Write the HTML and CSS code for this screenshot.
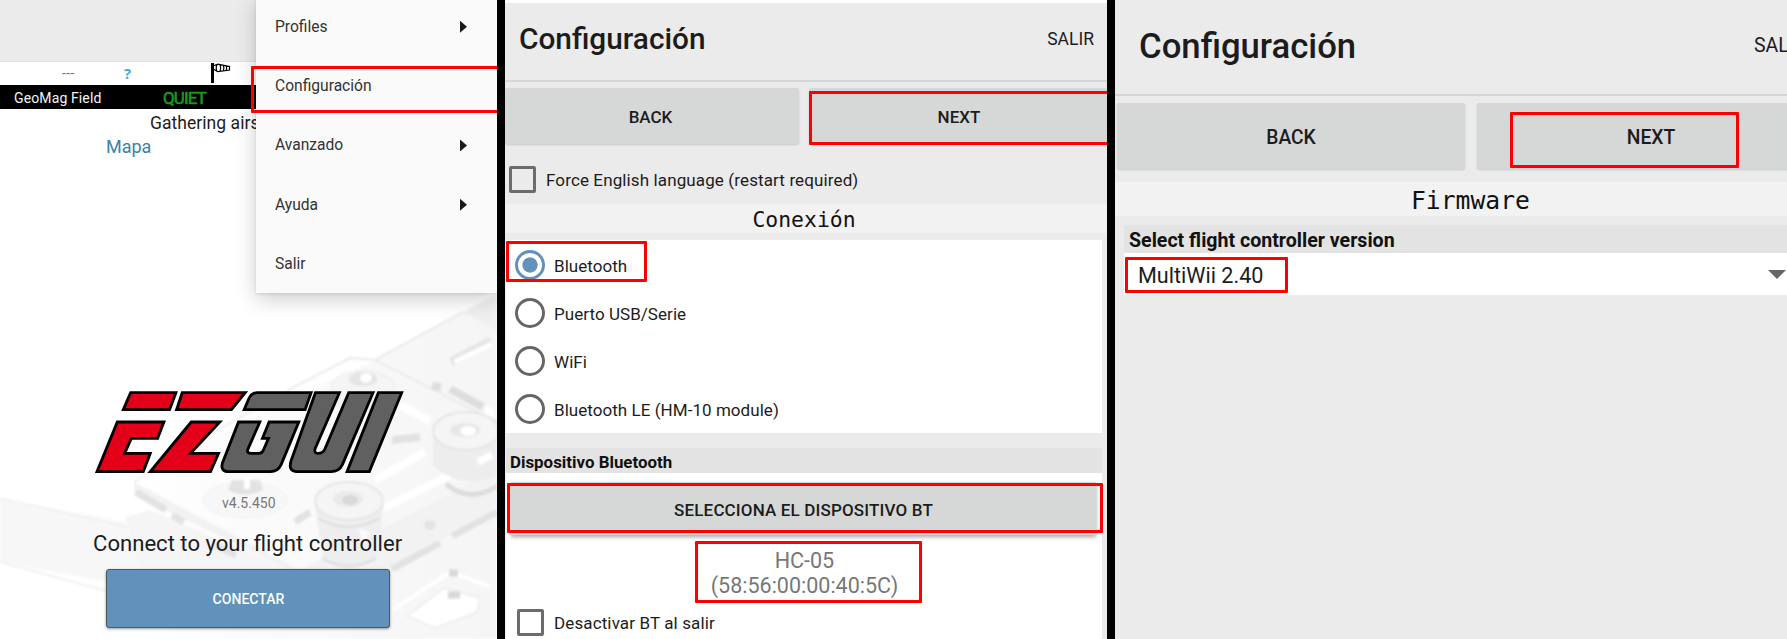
FILE: index.html
```html
<!DOCTYPE html>
<html lang="es">
<head>
<meta charset="utf-8">
<title>EZ-GUI</title>
<link rel="stylesheet" href="styles.css">
</head>
<body>
<main class="board">
  <section class="home">
    <svg class="art" viewBox="0 0 497 639">
      <defs>
        <linearGradient id="fade" x1="0" y1="0" x2="1" y2="0"><stop offset="0" stop-color="#fff"/><stop offset="1" stop-color="#f3f3f3"/></linearGradient>
        <filter id="soft"><feGaussianBlur stdDeviation="1.1"/></filter>
      </defs>
      <g filter="url(#soft)" opacity=".8">
        <path d="M0 498 L125 522 L150 590 L0 562Z" fill="#f6f6f6"/>
        <path d="M0 498 L140 530 M0 562 L110 592" stroke="#eee" fill="none" stroke-width="2"/>
        <path d="M375 360 L497 294 V639 H150 L145 520 L134 482 L200 440Z" fill="url(#fade)"/>
        <path d="M440 292 L463 312 L497 294 V330 L463 312" fill="#ececec"/>
        <path d="M375 360 L463 312 M134 482 L200 440 L300 384 L350 358 L375 360 L497 422" stroke="#e6e6e6" fill="none" stroke-width="2"/>
        <path d="M134 482 L300 570 L497 470 V506 L385 575 H300 L134 495Z" fill="#f0f0f0"/>
        <path d="M150 510 L125 517 L140 570 H290Z" fill="#f3f3f3"/>
        <path d="M136 492 L166 510 M172 515 L184 522 M215 545 L236 555 M295 522 L310 512 M392 569 L440 543 M452 536 L497 512" stroke="#dcdcdc" fill="none" stroke-width="7"/>
        <path d="M451 362 L491 341" stroke="#dfdfdf" stroke-width="9"/><path d="M454 362 L492 344" stroke="#fff" stroke-width="5"/>
        <path d="M432 386 L441 387 M450 389 L483 407" stroke="#d5d5d5" stroke-width="8"/><path d="M485 405 l9 4 v10 l-9 -5z" fill="#fff"/>
        <path d="M400 405 L430 421 M375 480 L425 452 M380 510 L450 475" stroke="#fff" stroke-width="8"/>
        <path d="M392 440 L420 437" stroke="#dcdcdc" stroke-width="8"/>
        <ellipse cx="363" cy="387" rx="32" ry="16" fill="#f3f3f3" stroke="#e6e6e6"/>
        <path d="M331 387 v16 q32 20 64 0 v-16 q-32 28 -64 0z" fill="#f0f0f0"/>
        <ellipse cx="363" cy="379" rx="14" ry="7" fill="#dedede"/><ellipse cx="366" cy="378" rx="6" ry="5" fill="#fff"/>
        <path d="M433 436 v30 q30 24 64 10 v-40z" fill="#e9e9e9"/>
        <path d="M446 484 q24 20 51 2" stroke="#d4d4d4" stroke-width="5" fill="none"/>
        <ellipse cx="466" cy="431" rx="33" ry="19" fill="#f3f3f3" stroke="#dedede" stroke-width="2"/>
        <ellipse cx="465" cy="430" rx="15" ry="7" fill="#e1e1e1"/><ellipse cx="468" cy="431" rx="8" ry="5" fill="#fff"/>
        <path d="M478 462 L492 455" stroke="#fff" stroke-width="7"/>
        <path d="M315 505 l8 55 q25 16 53 0 l8 -55z" fill="#ebebeb"/>
        <ellipse cx="349" cy="501" rx="34" ry="19" fill="#f3f3f3" stroke="#dfdfdf" stroke-width="2"/>
        <ellipse cx="348" cy="499" rx="15" ry="8" fill="#e6e6e6"/><ellipse cx="350" cy="500" rx="8" ry="5" fill="#cfcfcf"/>
        <path d="M318 518 q30 18 62 0 M322 558 q26 16 54 0" stroke="#dadada" stroke-width="3" fill="none"/>
        <path d="M358 528 l12 4 -6 12z" fill="#fafafa"/>
        <ellipse cx="245" cy="500" rx="42" ry="18" fill="#f6f6f6" stroke="#ececec"/>
        <path d="M232 480 h28 l3 10 q-16 9 -35 0z" fill="#dcdcdc"/><path d="M244 478 h6 v11 h-6z" fill="#fff"/>
        <path d="M407 616 L444 588 L480 598 L477 612 L435 628Z" fill="#fff" stroke="#ececec" stroke-width="2"/>
        <path d="M393 610 L450 572 L489 586" stroke="#fff" fill="none" stroke-width="4"/>
        <path d="M449 573 h9 M448 595 h12" stroke="#cfcfcf" stroke-width="7"/>
        <ellipse cx="430" cy="525" rx="6" ry="5" fill="#ddd"/>
      </g>
    </svg>
    <div class="home-body">
      <div class="appbar"></div>
      <div class="status">
        <span class="dashes">---</span><span class="unknown">?</span>
        <svg class="sock" viewBox="0 0 20 20"><path d="M0 0h3v20H0z"/><path d="M3 2.5L7 1.2 18.5 3.6V7L7 8.7 3 6.5M6.2 1.2q-2 3.7 0 7.5M9 2q1.5 3 0 6M12.3 2.5q1.2 2.5 0 5.2M15.5 3.3v3.9" fill="none" stroke="#000" stroke-width="1.2"/></svg>
      </div>
      <div class="geomag"><span class="geo-name">GeoMag Field</span><span class="geo-value">QUIET</span></div>
      <div class="gathering">Gathering airspace</div>
      <div class="map-link">Mapa</div>
      <svg class="logo" viewBox="40 44 934 252" role="img" aria-label="EZGUI">
        <g stroke="#000" stroke-width="8.5">
          <g fill="#e50019">
            <path d="M150 52H286L267 103H128Z"/>
            <path d="M110 140H250L231 189H152L132 234H209L188 289H49Z"/>
            <path d="M305 52H494L453 103H288Z"/>
            <path d="M332 140H418L330 234H414L390 289H209Z"/>
          </g>
          <g fill="#606060">
            <path d="M530 52H692L674 103H491L505 70Q513 52 530 52Z"/>
            <path d="M474 140H538L502 222Q498 233 510 234H535Q545 234 549 224L564 189H546L566 140H655L602 268Q592 289 570 289H445Q418 289 426 262Z"/>
            <path d="M705 52H777L704 220Q700 234 713 234Q727 234 733 222L805 52H878L786 268Q776 289 752 289H650Q622 289 632 256Z"/>
            <path d="M894 52H964L867 289H800Z"/>
          </g>
        </g>
      </svg>
      <div class="version">v4.5.450</div>
      <div class="prompt">Connect to your flight controller</div>
      <button class="connect">CONECTAR</button>
    </div>
    <nav class="menu">
      <div class="item">Profiles<i class="more"></i></div>
      <div class="item">Configuración</div>
      <div class="item">Avanzado<i class="more"></i></div>
      <div class="item">Ayuda<i class="more"></i></div>
      <div class="item">Salir</div>
    </nav>
    <div class="mark mark-menu"></div>
  </section>

  <div class="divider"></div>

  <section class="setup">
    <header class="titlebar"><h1>Configuración</h1><span class="exit">SALIR</span></header>
    <div class="steps"><button class="back">BACK</button><button class="next">NEXT</button></div>
    <label class="option force"><i class="box"></i><span class="force-text">Force English language (restart required)</span></label>
    <h2>Conexión</h2>
    <div class="card radios">
      <label class="option"><i class="radio on"></i><span>Bluetooth</span></label>
      <label class="option"><i class="radio"></i><span>Puerto USB/Serie</span></label>
      <label class="option"><i class="radio"></i><span>WiFi</span></label>
      <label class="option"><i class="radio"></i><span>Bluetooth LE (HM-10 module)</span></label>
    </div>
    <h3>Dispositivo Bluetooth</h3>
    <div class="card device">
      <button class="select">SELECCIONA EL DISPOSITIVO BT</button>
      <div class="address"><span>HC-05</span><span>(58:56:00:00:40:5C)</span></div>
      <label class="option off"><i class="box"></i><span>Desactivar BT al salir</span></label>
    </div>
    <div class="mark mark-next"></div>
    <div class="mark mark-bt"></div>
    <div class="mark mark-select"></div>
    <div class="mark mark-address"></div>
  </section>

  <div class="divider"></div>

  <section class="firmware">
    <header class="titlebar"><h1>Configuración</h1><span class="exit">SALIR</span></header>
    <div class="steps"><button class="back">BACK</button><button class="next">NEXT</button></div>
    <h2>Firmware</h2>
    <h3>Select flight controller version</h3>
    <div class="picker"><span class="value">MultiWii 2.40</span><i class="caret"></i></div>
    <div class="mark mark-next2"></div>
    <div class="mark mark-value"></div>
  </section>
</main>
</body>
</html>
```
FILE: styles.css
```css
* { box-sizing: border-box; }
body { margin: 0; font-family: Roboto, "Liberation Sans", sans-serif; color: #1c1c1c; }
.board { display: flex; width: 1787px; height: 639px; overflow: hidden; background: #ebebeb; }
.board span, .board div, .board button { white-space: nowrap; }
.divider { width: 8px; background: #000; flex: none; }
section { position: relative; overflow: hidden; flex: none; height: 639px; }
button { border: 0; padding: 0; font: inherit; color: inherit; }
h1, h2, h3 { margin: 0; font-weight: 400; white-space: nowrap; }
.mark { position: absolute; border: 3px solid #f00; border-radius: 1px; }

/* Home screen */
.home { width: 497px; background: #fff; }
.art { position: absolute; inset: 0; width: 497px; height: 639px; }
.home-body { position: relative; display: flex; flex-direction: column; }
.appbar { height: 62px; background: #ebebeb; border-bottom: 1px solid #e0e0e0; }
.status { display: flex; height: 23px; padding-left: 62px; line-height: 23px; }
.dashes { width: 62px; font-size: 14px; color: #777; letter-spacing: .4px; }
.unknown { width: 87px; font: 700 15px/22px "Open Sans", sans-serif; color: #3fa9d0; }
.sock { width: 20px; height: 20px; margin-top: 1px; }
.geomag { display: flex; height: 24px; padding-left: 14px; background: #000; color: #f4f4f4; line-height: 26px; }
.geo-name { width: 149px; font-size: 14px; letter-spacing: .12px; }
.geo-value { font-size: 17px; color: #1a9c1a; line-height: 27px; -webkit-text-stroke: .6px #1a9c1a; letter-spacing: -.9px; }
.gathering { height: 26px; padding-left: 150px; font-size: 17.5px; line-height: 28px; letter-spacing: .05px; }
.map-link { height: 24px; padding-left: 106px; font-size: 18px; line-height: 24px; color: #3a82a8; }
.logo { width: 311px; height: 84px; margin: 231px 0 0 94px; }
.version { height: 37px; margin-top: 10px; padding-left: 222px; font-size: 14px; line-height: 38px; color: #777; }
.prompt { height: 47px; padding-left: 93px; font-size: 22.1px; line-height: 44px; }
.connect { width: 284px; height: 59px; margin: 1px 0 0 106px; background: #6092bb; border: 1px solid #4c5760; border-radius: 3px; box-shadow: 0 1px 3px rgba(0,0,0,.4); color: #fff; font-size: 14px; font-weight: 500; padding-left: 1px; letter-spacing: .05px; }
.menu { position: absolute; left: 256px; top: -4px; width: 241px; height: 297px; background: #fafafa; box-shadow: 0 6px 20px rgba(0,0,0,.2), 0 1px 3px rgba(0,0,0,.1); }
.item { display: flex; justify-content: space-between; align-items: center; height: 59.4px; padding: 2px 30px 0 19px; font-size: 15.6px; color: #333; }
.more { width: 7px; height: 12px; background: #1a1a1a; clip-path: polygon(0 0, 100% 50%, 0 100%); }
.mark-menu { left: 251px; top: 66px; width: 250px; height: 47px; }

/* Connection settings */
.setup { width: 602px; background: #ebebeb; border-top: 3px solid #fff; }
.setup .titlebar { display: flex; height: 79px; border-bottom: 2px solid #d6d6d6; padding: 0 13px 0 14px; justify-content: space-between; line-height: 72px; }
.setup h1 { font-size: 29.8px; font-weight: 500; }
.setup .exit { font-size: 17.5px; line-height: 73px; }
.setup .steps { display: flex; gap: 10px; height: 62px; padding-top: 6px; }
.steps button { background: #d6d8d7; border-radius: 2px; box-shadow: 0 1px 2px rgba(0,0,0,.15); flex: none; font-weight: 500; }
.setup .back { width: 294px; padding: 2px 3px 0 0; font-size: 17px; }
.setup .next { width: 300px; padding-top: 2px; font-size: 17px; }
.option { display: flex; align-items: center; font-size: 17px; letter-spacing: .05px; }
.option span { padding-top: 1px; }
.box { width: 27px; height: 27px; border: 3px solid #6c6c6c; border-radius: 2px; flex: none; }
.force { height: 60px; padding: 11px 0 0 4px; gap: 10px; letter-spacing: .12px; }
.setup h2 { height: 29px; padding-right: 4px; background: #f2f2f2; font: 21.4px/31px "DejaVu Sans Mono", monospace; text-align: center; color: #111; }
.card { width: 596px; margin-left: 1px; background: #fff; }
.radios { height: 193px; margin-top: 7px; padding-top: 1px; }
.radios .option { height: 48px; padding-left: 9px; gap: 9px; }
.radio { width: 30px; height: 30px; border: 3px solid #666; border-radius: 50%; flex: none; }
.radio.on { border-color: #6092bb; background: radial-gradient(circle, #6092bb 7.2px, transparent 8px); }
.setup h3 { width: 596px; height: 25px; margin: 15px 0 0 1px; padding-left: 4px; background: #e3e3e3; font-size: 16.9px; font-weight: 700; line-height: 28px; color: #111; }
.device { height: 170px; padding-top: 9px; }
.select { display: block; width: 585px; height: 53px; margin-left: 5px; background: #d6d8d7; box-shadow: 0 2px 4px rgba(0,0,0,.35); font-size: 17px; font-weight: 500; letter-spacing: .15px; padding-top: 2px; }
.address { display: flex; flex-direction: column; align-items: center; height: 66px; padding: 14px 0 0 1px; color: #777; font-size: 21.5px; line-height: 24.5px; }
.off { height: 42px; padding: 1px 0 0 11px; gap: 10px; letter-spacing: .12px; }
.mark-next { left: 304px; top: 88px; width: 310px; height: 54px; }
.mark-bt { left: 1px; top: 238px; width: 141px; height: 41px; }
.mark-select { left: 2px; top: 480px; width: 596px; height: 50px; }
.mark-address { left: 190px; top: 538px; width: 227px; height: 62px; }

/* Firmware settings */
.firmware { width: 672px; background: #ebebeb; }
.firmware .titlebar { display: flex; height: 96px; border-bottom: 2px solid #d6d6d6; padding-left: 24px; line-height: 92px; }
.firmware h1 { width: 615px; flex: none; font-size: 34.7px; font-weight: 500; }
.firmware .exit { font-size: 19.5px; }
.firmware .steps { display: flex; gap: 12px; height: 86px; padding: 7px 0 13px 2px; }
.firmware .back { width: 348px; font-size: 19.3px; padding-top: 2px; }
.firmware .next { width: 348px; font-size: 19.3px; padding-top: 2px; }
.firmware h2 { height: 34px; padding-left: 296px; background: #f2f2f2; font: 24.7px/37px "DejaVu Sans Mono", monospace; color: #111; }
.firmware h3 { height: 28px; margin: 9px 0 0 9px; padding-left: 5px; background: #e3e3e3; font-size: 19.6px; font-weight: 700; line-height: 31px; color: #111; }
.picker { display: flex; justify-content: space-between; align-items: center; height: 42px; margin-left: 9px; padding: 1px 1px 0 14px; background: #fff; font-size: 21.6px; }
.value { padding-top: 1px; }
.caret { width: 18px; height: 9px; background: #666; clip-path: polygon(0 0, 100% 0, 50% 100%); }
.mark-next2 { left: 395px; top: 112px; width: 229px; height: 56px; }
.mark-value { left: 10px; top: 257px; width: 163px; height: 36px; }
```
